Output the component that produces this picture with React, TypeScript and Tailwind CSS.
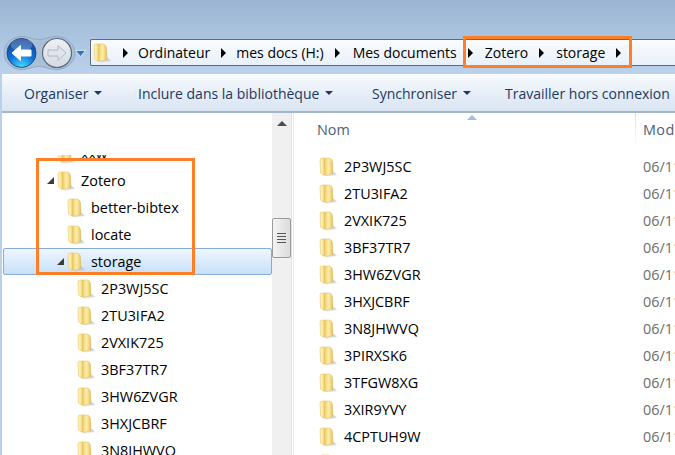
import React from "react";

function Folder({ id }: { id: string }) {
  return (
    <svg width="19" height="20" viewBox="0 0 19 20" className="shrink-0">
      <defs>
        <linearGradient id={id + "a"} x1="0" y1="0" x2="1" y2="0">
          <stop offset="0" stopColor="#fdf3bb" />
          <stop offset="0.22" stopColor="#fbe9a3" />
          <stop offset="0.34" stopColor="#e8c664" />
          <stop offset="0.45" stopColor="#f4d981" />
          <stop offset="0.65" stopColor="#fcecaa" />
          <stop offset="0.85" stopColor="#f3d67c" />
          <stop offset="1" stopColor="#dbb455" />
        </linearGradient>
      </defs>
      <path d="M7 16.5 L15 15.5 L18.5 18 L8 19.5 Z" fill="#bfc6d0" opacity="0.45" />
      <path d="M12 15 L15.5 15 L17 17.5 L12 18 Z" fill="#aab3bf" opacity="0.35" />
      <path d="M1 3 Q1 1 3 1 L10.5 1 Q13 1.5 13.5 5 L14 16.5 L7 18.5 Q4 18.5 1.5 16 Z" fill={`url(#${id}a)`} />
      <path d="M1 3 Q1 1 3 1 L10.5 1 Q13 1.5 13.5 5 L14 16.5 L7 18.5 Q4 18.5 1.5 16 Z" fill="none" stroke="#e0bd62" strokeWidth="0.5" />
    </svg>
  );
}

function Crumb({ children, offset = "" }: { children: string; offset?: string }) {
  return (
    <>
      <span className={`whitespace-nowrap ${offset}`}>{children}</span>
      <span className="w-0 h-0 border-y-[5px] border-y-transparent border-l-[5px] border-l-black shrink-0" />
    </>
  );
}

function Tool({ label, width }: { label: string; width: string }) {
  return (
    <div className={`flex items-center gap-[6px] whitespace-nowrap shrink-0 ${width}`}>
      <span>{label}</span>
      <span className="w-0 h-0 border-x-[4px] border-x-transparent border-t-[4px] border-t-[#1e395b]" />
    </div>
  );
}

function TreeRow({ label, pad, open, selected, id }: { label: string; pad: string; open?: boolean; selected?: boolean; id: string }) {
  return (
    <div className={`h-[27px] flex items-center shrink-0 ${pad} ${selected ? "border border-[#84acdd] rounded-[2px] bg-gradient-to-b from-[#eef6fe] to-[#c8e0f9]" : ""}`}>
      <span className="w-[10px] shrink-0 flex">
        {open && <span className="w-0 h-0 border-b-[7px] border-b-[#3c3c3c] border-l-[7px] border-l-transparent" />}
      </span>
      <Folder id={id} />
      <span className="ml-[5px] text-[14.4px] text-black whitespace-nowrap">{label}</span>
    </div>
  );
}

const treeItems = ["2P3WJ5SC", "2TU3IFA2", "2VXIK725", "3BF37TR7", "3HW6ZVGR", "3HXJCBRF", "3N8JHWVQ"];
const listItems = ["2P3WJ5SC", "2TU3IFA2", "2VXIK725", "3BF37TR7", "3HW6ZVGR", "3HXJCBRF", "3N8JHWVQ", "3PIRXSK6", "3TFGW8XG", "3XIR9YVY", "4CPTUH9W", "4DKM2QZA"];

export default function App() {
  return (
    <div className="relative w-[675px] h-[455px] overflow-hidden flex flex-col bg-[#b9d1ea] text-[14px]" style={{ fontFamily: '"Open Sans", "Noto Sans", sans-serif' }}>
      {/* Title + navigation */}
      <div className="h-[74px] shrink-0 bg-gradient-to-b from-[#9bb5d2] to-[#bad2ec] flex items-end pb-[4px] pl-[4px]">
        <svg width="82" height="34" viewBox="0 0 82 34" className="shrink-0 mr-[4px]">
          <defs>
            <radialGradient id="bk" cx="0.5" cy="1" r="0.95">
              <stop offset="0" stopColor="#45e4ff" />
              <stop offset="0.5" stopColor="#0f74dc" />
              <stop offset="1" stopColor="#154296" />
            </radialGradient>
            <linearGradient id="fw" x1="0" y1="0" x2="0" y2="1">
              <stop offset="0" stopColor="#eef1f5" />
              <stop offset="1" stopColor="#d3dae2" />
            </linearGradient>
          </defs>
          <path d="M17 0.5 C26 0.5 28 3.5 35 3.5 C42 3.5 44 0.5 53 0.5 C62 0.5 71 8 71 17 C71 26 62 33.5 53 33.5 C44 33.5 42 30.5 35 30.5 C28 30.5 26 33.5 17 33.5 C8 33.5 0 26 0 17 C0 8 8 0.5 17 0.5 Z" fill="#a9c0d8" stroke="#93a9c1" strokeWidth="1" />
          <circle cx="17.5" cy="17" r="14.5" fill="url(#bk)" stroke="#2a4a80" strokeWidth="1" />
          <ellipse cx="17.5" cy="9" rx="11" ry="6" fill="#ffffff" opacity="0.22" />
          <path d="M8 17 L16.5 9.5 L16.5 14 L27 14 L27 20 L16.5 20 L16.5 24.5 Z" fill="#ffffff" stroke="#ffffff" strokeWidth="1" strokeLinejoin="round" />
          <circle cx="53" cy="17" r="14.5" fill="url(#fw)" stroke="#5d6877" strokeWidth="1.2" />
          <path d="M62 17 L54 9.5 L54 14 L44 14 L44 20 L54 20 L54 24.5 Z" fill="#dfe5ec" stroke="#aeb9c5" strokeWidth="1" strokeLinejoin="round" />
          <path d="M71.5 14.5 L81.5 14.5 L76.5 20.5 Z" fill="#2c74b5" stroke="#e4f0fb" strokeWidth="0.8" />
        </svg>
        <div className="flex-1 h-[27px] mb-[4px] bg-gradient-to-b from-[#fafcfe] to-[#e8f0f9] border border-[#5d6b7a] border-r-0 rounded-l-[2px] flex items-center pl-[2px] text-black">
          <Folder id="addr" />
          <span className="w-0 h-0 ml-[11px] border-y-[5px] border-y-transparent border-l-[5px] border-l-black shrink-0" />
          <span className="w-[10px] shrink-0" />
          <div className="flex items-center gap-x-[11px]">
            <Crumb>Ordinateur</Crumb>
            <Crumb offset="-ml-[1px]">mes docs (H:)</Crumb>
            <Crumb offset="ml-[2px]">Mes documents</Crumb>
            <Crumb offset="ml-[1px]">Zotero</Crumb>
            <Crumb offset="ml-[1px]">storage</Crumb>
          </div>
        </div>
      </div>

      {/* Command bar */}
      <div className="h-[39px] shrink-0 ml-[2px] bg-gradient-to-b from-[#f8fbfe] via-[#e6eef8] to-[#dae5f3] border-b-[2px] border-b-[#a5b5ca] border-t border-t-white flex items-center pl-[22px] text-[#1e395b] whitespace-nowrap">
        <Tool label="Organiser" width="w-[114px]" />
        <Tool label="Inclure dans la bibliothèque" width="w-[234px]" />
        <Tool label="Synchroniser" width="w-[133px]" />
        <span className="text-[14px]">Travailler hors connexion</span>
      </div>

      {/* Body */}
      <div className="flex-1 min-h-0 ml-[2px] bg-white flex">
        {/* Tree */}
        <div className="w-[270px] shrink-0 flex flex-col overflow-hidden">
          <div className="h-[42px] shrink-0" />
          <div className="h-[12px] shrink-0 overflow-hidden flex flex-col justify-end">
            <TreeRow label="xxw" pad="pl-[45px]" id="t0" />
          </div>
          <TreeRow label="Zotero" pad="pl-[45px]" open id="t1" />
          <TreeRow label="better-bibtex" pad="pl-[55px]" id="t2" />
          <TreeRow label="locate" pad="pl-[55px]" id="t3" />
          <TreeRow label="storage" pad="pl-[53px] ml-[1px]" open selected id="t4" />
          {treeItems.map((t, i) => (
            <TreeRow key={t} label={t} pad="pl-[65px]" id={"tr" + i} />
          ))}
        </div>

        {/* Scrollbar */}
        <div className="relative w-[20px] shrink-0 bg-[#f0f0f0] border-r border-r-[#e3e3e3]">
          <span className="absolute left-[5px] top-[8px] w-0 h-0 border-x-[5px] border-x-transparent border-b-[5px] border-b-[#4d4d4d]" />
          <div className="absolute left-0 top-[105px] w-[19px] h-[40px] rounded-[2px] border border-[#9b9b9b] bg-gradient-to-r from-[#f4f4f4] to-[#dcdcdc] flex flex-col items-center justify-center gap-[2px]">
            <span className="w-[9px] h-px bg-[#555]" />
            <span className="w-[9px] h-px bg-[#555]" />
            <span className="w-[9px] h-px bg-[#555]" />
            <span className="w-[9px] h-px bg-[#555]" />
          </div>
        </div>

        {/* List */}
        <div className="flex-1 min-w-0 border-l border-l-[#e8edf3] ml-[1px] flex flex-col overflow-hidden">
          <div className="relative h-[34px] shrink-0 flex items-center pl-[23px] text-[14.4px] text-[#4c607a]">
            <span className="w-[318px] shrink-0">Nom</span>
            <span className="w-px h-[34px] bg-gradient-to-b from-[#d5dfeb] to-white shrink-0" />
            <span className="ml-[7px] whitespace-nowrap tracking-[0.4px]">Modifié le</span>
            <span className="absolute left-[173px] top-[2px] w-0 h-0 border-x-[5px] border-x-transparent border-b-[5px] border-b-[#9fc0dc]" />
          </div>
          <div className="h-[6px] shrink-0" />
          {listItems.map((t, i) => (
            <div key={t} className="h-[27px] shrink-0 flex items-center pl-[25px]">
              <Folder id={"l" + i} />
              <span className="ml-[6px] w-[299px] shrink-0 text-[14.4px] text-black">{t}</span>
              <span className="text-[14.4px] text-[#6d6d6d] whitespace-nowrap">06/11/2018 10:12</span>
            </div>
          ))}
        </div>
      </div>

      {/* Annotation rectangles */}
      <div className="absolute left-[463px] top-[36px] w-[169px] h-[32px] border-[3px] border-[#ff7f27]" />
      <div className="absolute left-[36px] top-[158px] w-[159px] h-[117px] border-[3px] border-[#ff7f27]" />
    </div>
  );
}
